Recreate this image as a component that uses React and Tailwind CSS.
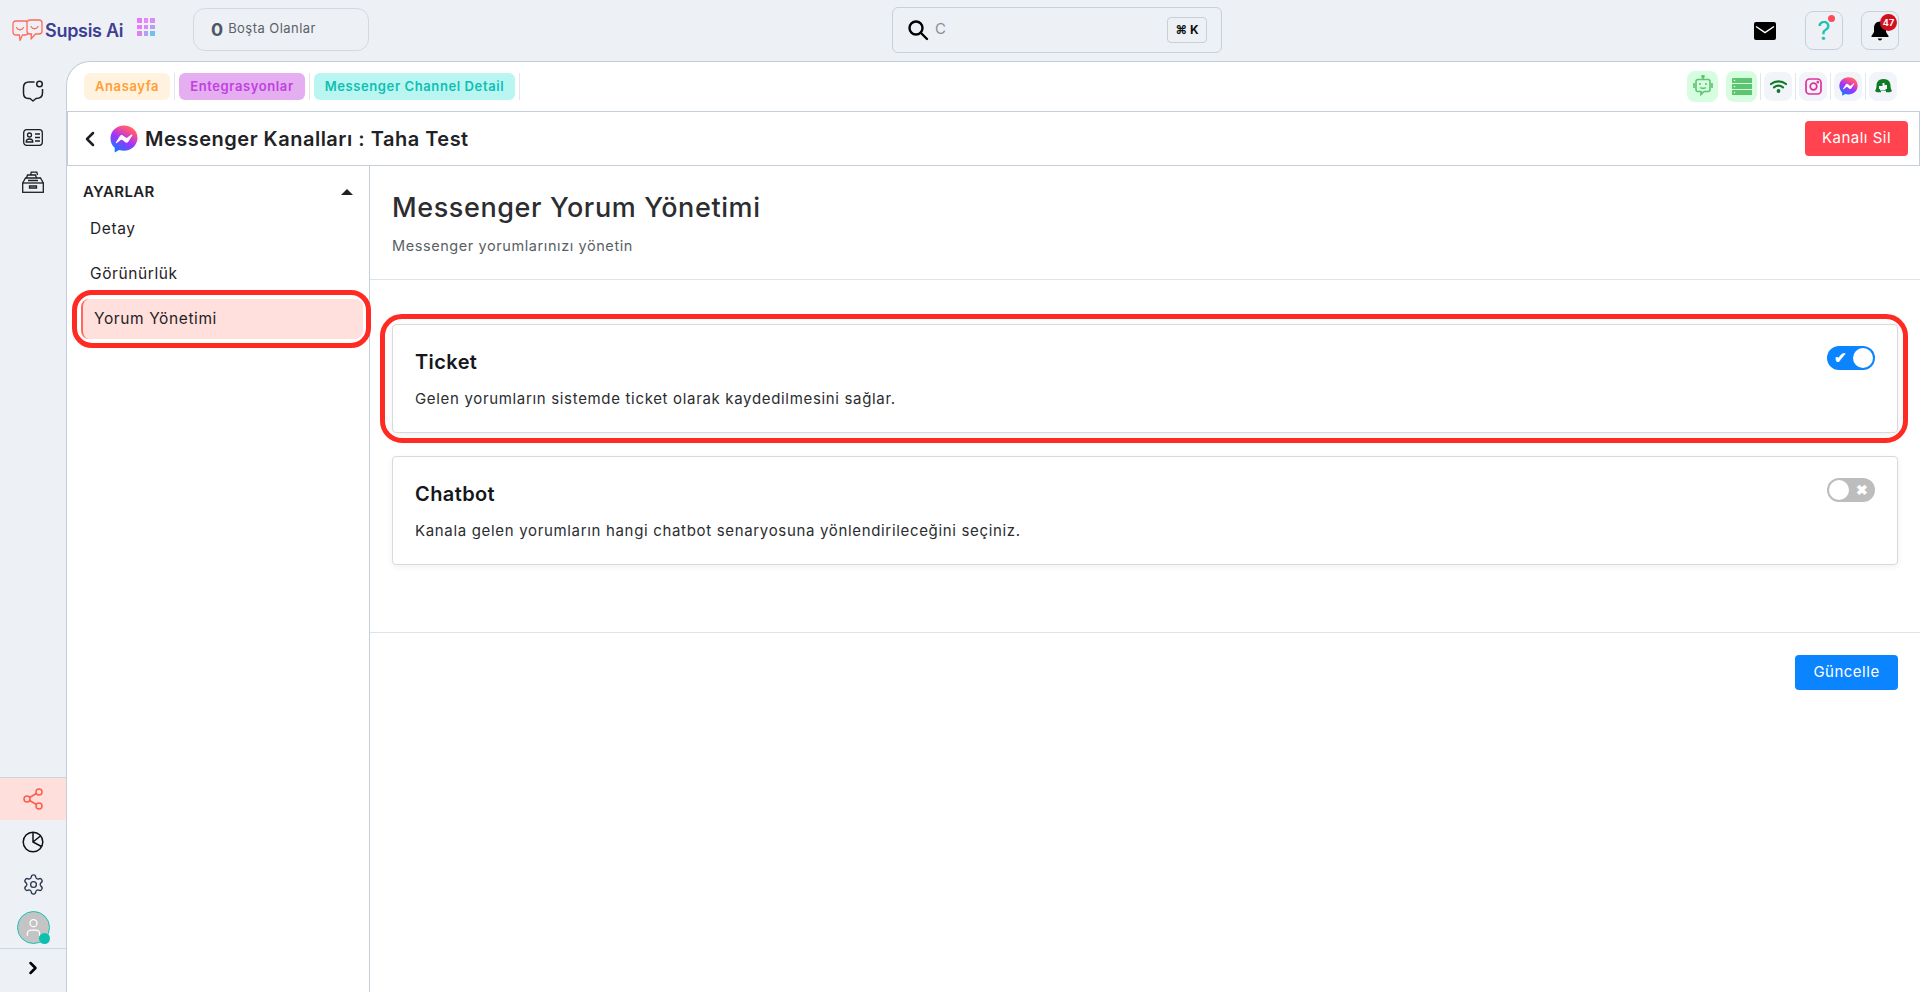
import { Share2, Settings, ChevronRight, ChevronLeft, User } from "lucide-react"

const font = { fontFamily: "Inter, 'Noto Sans', sans-serif" }

function LogoMark() {
  return (
    <svg width="31" height="24" viewBox="0 0 31 24" fill="none" stroke="#ff6a5c" strokeWidth="1.300" strokeLinecap="round" strokeLinejoin="round">
      <path d="M4 2h9c1.800 0 3 1.200 3 3v8c0 1.800-1.200 3-3 3h-2.500L8 21.500 7.500 16H4c-1.800 0-3-1.200-3-3V5c0-1.800 1.200-3 3-3z" />
      <path d="M4.500 8.500c1.500 3 5.500 3 7 0" />
      <path d="M18 1h9c1.800 0 3 1.200 3 3v8c0 1.800-1.200 3-3 3h-3.500L19 20l.5-5H18c-1.800 0-3-1.200-3-3V4c0-1.800 1.200-3 3-3z" fill="#edf1f6" />
      <path d="M19 7.500c1.500 3 5.500 3 7 0" />
    </svg>
  )
}

function AppGrid() {
  const colors = ["#e879f9", "#e28af7", "#d88df6", "#e879f9", "#d58cf5", "#b99cf3", "#df80f8", "#b3a0f2", "#6cc3f3"]
  return (
    <div className="grid grid-cols-3 gap-[2px] w-[18px] h-[18px]">
      {colors.map((c, i) => <span key={i} className="block" style={{ background: c }} />)}
    </div>
  )
}

function MessengerIcon({ size = 28 }) {
  return (
    <svg width={size} height={size} viewBox="0 0 28 28">
      <defs>
        <linearGradient id={"mg" + size} x1="0.25" y1="1" x2="0.8" y2="0">
          <stop offset="0" stopColor="#0a7cff" />
          <stop offset="0.45" stopColor="#a033ff" />
          <stop offset="0.8" stopColor="#ff5280" />
          <stop offset="1" stopColor="#ff7061" />
        </linearGradient>
      </defs>
      <path d="M14 0.500C6.400 0.500 0.500 6.100 0.500 13.400c0 3.800 1.600 7.100 4.200 9.400v4.700l4.400-2.500c1.500.4 3.100.7 4.900.7 7.600 0 13.500-5.600 13.500-12.900S21.600.5 14 .5z" fill={"url(#mg" + size + ")"} />
      <path d="M5.900 17.200l4-6.300c.6-1 2-1.300 3-.5l3.200 2.400c.3.2.7.2 1 0l4.300-3.300c.6-.4 1.300.3.900.9l-4 6.300c-.6 1-2 1.300-3 .5l-3.200-2.400c-.3-.2-.7-.2-1 0l-4.300 3.300c-.6.400-1.300-.3-.9-.9z" fill="#fff" />
    </svg>
  )
}

function Tab({ label, className }) {
  return <span className={"h-[27px] px-[11px] flex items-center rounded-md text-[13px] tracking-[0.6px] font-semibold " + className}>{label}</span>
}

function Sep() {
  return <span className="w-px h-[27px] bg-[#e3e7ec]" />
}

function IconBox({ children }) {
  return <span className="w-[28px] h-[29px] rounded-lg bg-[#f1f4f8] flex items-center justify-center">{children}</span>
}

function Toggle({ on }) {
  if (on) {
    return (
      <div className="relative w-[48px] h-[24px] rounded-full bg-[#0a84ff] shrink-0">
        <span className="absolute left-[7px] top-[3px] text-white text-[15px] font-bold leading-[17px]">✔</span>
        <span className="absolute right-[2px] top-[2px] w-[20px] h-[20px] rounded-full bg-white" />
      </div>
    )
  }
  return (
    <div className="relative w-[48px] h-[24px] rounded-full bg-[#bdbdbd] shrink-0">
      <span className="absolute right-[7px] top-[3px] text-white text-[14px] font-bold leading-[17px]">✖</span>
      <span className="absolute left-[2px] top-[2px] w-[20px] h-[20px] rounded-full bg-white" />
    </div>
  )
}

function SettingCard({ title, text, on, marked }) {
  return (
    <div className="relative h-[109px] rounded border border-[#d9d9d9] bg-white shadow-[0_2px_6px_rgba(0,0,0,0.06)] pl-[22px] pr-[22px] pt-[21px] flex justify-between">
      <div>
        <h3 className="text-[20px] leading-[32px] tracking-[0.4px] font-semibold text-[#15171a]">{title}</h3>
        <p className="mt-[10px] text-[15px] leading-[22px] tracking-[0.67px] text-[#2b2d30]">{text}</p>
      </div>
      <Toggle on={on} />
      {marked && <div className="absolute -left-[13px] -right-[11px] -top-[11px] -bottom-[11px] rounded-[22px] border-[5px] border-[#ff2a22] pointer-events-none" />}
    </div>
  )
}

export default function App() {
  return (
    <div className="h-screen w-full flex flex-col bg-[#edf1f6] overflow-hidden" style={font}>
      {/* top bar */}
      <header className="h-[61px] shrink-0 flex items-center relative">
        <div className="flex items-center w-[193px] pl-[12px] shrink-0">
          <LogoMark />
          <span className="ml-[2px] text-[18px] tracking-[-0.3px] font-semibold text-[#3d4092]">Supsis Ai</span>
          <span className="ml-[14px] -mt-[7px]"><AppGrid /></span>
        </div>
        <div className="w-[176px] h-[43px] -mt-[3px] shrink-0 rounded-xl border border-[#d3d9df] flex items-center pl-[17px]">
          <span className="text-[18px] font-bold text-[#4d5666]">0</span>
          <span className="ml-[5px] text-[13px] tracking-[0.45px] text-[#5c6068]">Boşta Olanlar</span>
        </div>
        <div className="ml-[523px] w-[330px] h-[46px] shrink-0 -mt-[2px] rounded-md border border-[#c6d0d8] flex items-center pl-[14px] pr-[14px]">
          <svg width="22" height="22" viewBox="0 0 22 22" fill="none" stroke="#000" strokeWidth="2.400" strokeLinecap="round"><circle cx="9" cy="9" r="6.500" /><path d="M14 14l6 6" /></svg>
          <span className="ml-[6px] text-[15px] text-[#8a8f96]">C</span>
          <span className="ml-auto w-[40px] h-[26px] rounded border border-[#c6d0d8] flex items-center justify-center text-[12px] font-bold text-[#111]">⌘ K</span>
        </div>
        <div className="ml-auto flex items-center pr-[21px]">
          <svg width="22" height="18" viewBox="0 0 22 18"><rect width="22" height="18" rx="2" fill="#000" /><path d="M2 4.500l9 6 9-6" fill="none" stroke="#fff" strokeWidth="1.500" /></svg>
          <span className="relative ml-[29px] w-[38px] h-[39px] rounded-lg border border-[#c6d0d8] flex items-center justify-center">
            <span className="text-[26px] font-normal text-[#17c3b2] leading-none">?</span>
            <span className="absolute right-[7px] top-[3px] w-[7px] h-[7px] rounded-full bg-[#ff4b55]" />
          </span>
          <span className="relative ml-[18px] w-[38px] h-[39px] rounded-lg border border-[#c6d0d8] flex items-center justify-center">
            <svg width="20" height="22" viewBox="0 0 20 22"><path d="M10 1.500c-3.600 0-6 2.800-6 6.200v4.300L1.500 16v1h17v-1L16 12V7.700c0-3.400-2.400-6.200-6-6.200z" fill="#000" /><path d="M7.800 18.500c.4 1.300 1.100 2 2.200 2s1.800-.7 2.200-2z" fill="#000" /></svg>
            <span className="absolute right-[1px] top-[2px] w-[17px] h-[17px] rounded-full bg-[#d40f1e] text-white text-[9px] font-bold flex items-center justify-center">47</span>
          </span>
        </div>
      </header>

      <div className="flex-1 flex min-h-0">
        {/* icon rail */}
        <aside className="w-[66px] shrink-0 flex flex-col items-center">
          <div className="mt-[18px] h-[26px] flex items-center">
            <svg width="22" height="24" viewBox="0 0 22 24" fill="none" stroke="#1c1f23" strokeWidth="1.500" strokeLinejoin="round">
              <path d="M12.500 2H7C3.500 2 1.500 4 1.500 7.500V13c0 3.500 2 5.500 5 5.500H8l3 2.500 3-2.500c4 0 6.500-2 6.500-5.500V9" />
              <circle cx="17.500" cy="4" r="2.800" />
            </svg>
          </div>
          <div className="mt-[20px] h-[24px] flex items-center">
            <svg width="20" height="17" viewBox="0 0 20 17" fill="none" stroke="#1c1f23" strokeWidth="1.300">
              <rect x="0.700" y="0.700" width="18.600" height="15.600" rx="3" />
              <circle cx="6.500" cy="6" r="2" />
              <path d="M3.200 13c0-2 1.200-3 3.300-3s3.300 1 3.300 3z" />
              <path d="M12 5h5M12 8.500h5M12 12h5" />
            </svg>
          </div>
          <div className="mt-[21px] h-[24px] flex items-center">
            <svg width="22" height="22" viewBox="0 0 22 22" fill="none" stroke="#1c1f23" strokeWidth="1.300">
              <rect x="0.700" y="12" width="20.600" height="9.300" />
              <path d="M0.700 12l2.800-5h15l2.800 5M7.500 15h7v2h-7z" />
              <path d="M4.500 7l1-3h8l1 3M6 9.500h10M8.500 4l.8-2.800h5.500l.7 2.800" />
            </svg>
          </div>

          <div className="mt-auto w-full flex flex-col items-center">
            <div className="w-full h-[43px] border-t border-[#cbd5dd] bg-[#ffdfdb] flex items-center justify-center">
              <Share2 size={24} strokeWidth={1.500} color="#ff5a4d" />
            </div>
            <div className="h-[43px] flex items-center">
              <svg width="22" height="22" viewBox="0 0 22 22" fill="none" stroke="#111" strokeWidth="1.500">
                <circle cx="11" cy="11" r="9.800" />
                <path d="M11 1.200V11l8.500 4.500M11 11l8-6.500" />
              </svg>
            </div>
            <div className="h-[43px] mb-[5px] flex items-center">
              <Settings size={23} strokeWidth={1.400} color="#2b3550" />
            </div>
            <div className="relative h-[33px] w-[33px] rounded-full bg-[#c4c4c4] border border-[#17c3b2] flex items-center justify-center">
              <User size={21} strokeWidth={1.500} color="#fff" />
              <span className="absolute -right-[1px] -bottom-[1px] w-[11px] h-[11px] rounded-full bg-[#0dbfae]" />
            </div>
            <div className="w-full mt-[4px] h-[44px] pb-[6px] border-t border-[#cbd5dd] flex items-center justify-center">
              <ChevronRight size={20} strokeWidth={3} color="#000" />
            </div>
          </div>
        </aside>

        {/* main panel */}
        <main className="flex-1 min-w-0 flex flex-col bg-white rounded-tl-[24px] border-l border-t border-[#c3ced8]">
          <div className="h-[49px] shrink-0 flex items-center pl-[17px] pr-[23px] gap-[4px]">
            <Tab label="Anasayfa" className="bg-[#fff2df] text-[#ffa033]" />
            <Sep />
            <Tab label="Entegrasyonlar" className="bg-[#e4aef0] text-[#c23fe2]" />
            <Sep />
            <Tab label="Messenger Channel Detail" className="bg-[#baf6f1] text-[#0cc0b4]" />
            <Sep />
            <div className="ml-auto flex items-center gap-[3px]">
              <span className="w-[31px] h-[31px] rounded-lg bg-[#d6fde0] flex items-center justify-center">
                <svg width="20" height="24" viewBox="0 0 20 24" fill="none" stroke="#5dc46f" strokeWidth="1.600">
                  <path d="M10 1v3" /><circle cx="10" cy="1.500" r="1" fill="#5dc46f" />
                  <path d="M5 4.500h10c1.300 0 2 .7 2 2v8c0 1.300-.7 2-2 2h-4l-3 3v-3H5c-1.300 0-2-.7-2-2v-8c0-1.300.7-2 2-2z" />
                  <path d="M7 8v2M13 8v2M7 12.500c1.500 1.200 4.500 1.200 6 0M1 8v5M19 8v5" />
                </svg>
              </span>
              <span className="ml-[5px] w-[31px] h-[31px] rounded-lg bg-[#d6fde0] flex items-center justify-center">
                <svg width="20" height="17" viewBox="0 0 20 17" fill="#5dc46f">
                  <rect y="0" width="20" height="5" rx="0.500" /><rect y="6" width="20" height="5" rx="0.500" /><rect y="12" width="20" height="5" rx="0.500" />
                  <circle cx="2.500" cy="2.500" r="0.800" fill="#d6fde0" /><circle cx="2.500" cy="8.500" r="0.800" fill="#d6fde0" /><circle cx="2.500" cy="14.500" r="0.800" fill="#d6fde0" />
                </svg>
              </span>
              <Sep />
              <IconBox>
                <svg width="17" height="13" viewBox="0 0 17 13" fill="none" stroke="#0d7a25" strokeWidth="2.200" strokeLinecap="round">
                  <path d="M1 4c4.500-3.600 10.500-3.600 15 0" /><path d="M4 7.300c2.700-2 6.300-2 9 0" /><circle cx="8.500" cy="11" r="0.800" fill="#0d7a25" />
                </svg>
              </IconBox>
              <Sep />
              <IconBox>
                <svg width="17" height="17" viewBox="0 0 17 17" fill="none" stroke="#e1309c" strokeWidth="1.700">
                  <rect x="1" y="1" width="15" height="15" rx="3.500" /><circle cx="8.500" cy="8.500" r="3.300" /><circle cx="12.800" cy="4.200" r="0.500" fill="#e1309c" />
                </svg>
              </IconBox>
              <Sep />
              <IconBox><MessengerIcon size={19} /></IconBox>
              <Sep />
              <IconBox>
                <svg width="17" height="15" viewBox="0 0 17 15">
                  <path d="M8.500 0C4 0 1.500 2.800 1.500 6.500c0 2.300-.5 4-1.500 5.500.8.800 2 1.300 3.500 1.300h10c1.500 0 2.700-.5 3.500-1.300-1-1.500-1.500-3.200-1.500-5.500C15.500 2.800 13 0 8.500 0z" fill="#0d7a25" />
                  <path d="M7.500 4h2v2H12v4H10.500v1.500H5V10H4V7h3.500z" fill="#f1f4f8" />
                  <rect x="6" y="12" width="5" height="3" fill="#f1f4f8" />
                </svg>
              </IconBox>
            </div>
          </div>

          <div className="h-[55px] shrink-0 flex items-center border-t border-b border-r border-l border-[#c3ced8] pl-[10px] pr-[11px]">
            <ChevronLeft size={24} strokeWidth={2.500} color="#1c1f23" />
            <span className="ml-[8px]"><MessengerIcon size={28} /></span>
            <h1 className="ml-[7px] text-[20px] tracking-[0.5px] font-semibold text-[#1f2226]">Messenger Kanalları : Taha Test</h1>
            <button className="ml-auto w-[103px] h-[35px] rounded bg-[#ff444f] text-white text-[15px] tracking-[0.5px]">Kanalı Sil</button>
          </div>

          <div className="flex-1 flex min-h-0">
            {/* settings menu */}
            <nav className="w-[303px] shrink-0 border-r border-[#c3ced8] pl-[17px] pr-[6px] pt-[13px]">
              <div className="h-[26px] -ml-[1px] flex items-center justify-between pr-[10px]">
                <span className="text-[15px] tracking-[0.35px] font-semibold text-[#1f2226]">AYARLAR</span>
                <span className="w-0 h-0 border-l-[6px] border-r-[6px] border-b-[6px] border-l-transparent border-r-transparent border-b-[#1f2226]" />
              </div>
              <div className="mt-[4px] h-[40px] flex items-center pl-[6px] text-[15.500px] tracking-[0.6px] text-[#1f2226]">Detay</div>
              <div className="mt-[5px] h-[40px] flex items-center pl-[6px] text-[15.500px] tracking-[0.6px] text-[#1f2226]">Görünürlük</div>
              <div className="relative mt-[5px] -ml-[3px] h-[40px] flex items-center rounded-lg pl-[11px] bg-[#ffe0dc] border-l-2 border-[#ff6a5c] text-[15.500px] tracking-[0.6px] text-[#1f2226]">
                Yorum Yönetimi
                <div className="absolute -left-[11px] -right-[8px] -top-[9px] -bottom-[9px] rounded-[20px] border-[5px] border-[#ff2a22] pointer-events-none" />
              </div>
            </nav>

            {/* content */}
            <section className="flex-1 min-w-0">
              <div className="h-[114px] border-b border-[#dfe3e7] pl-[22px] pt-[24px]">
                <h2 className="text-[27px] leading-[36px] tracking-[0.6px] font-medium text-[#2b2d30]">Messenger Yorum Yönetimi</h2>
                <p className="mt-[9px] text-[14.500px] leading-[22px] tracking-[0.58px] text-[#5a5f66]">Messenger yorumlarınızı yönetin</p>
              </div>
              <div className="h-[353px] border-b border-[#dfe3e7] px-[22px] pt-[44px] flex flex-col gap-[23px]">
                <SettingCard on marked title="Ticket" text="Gelen yorumların sistemde ticket olarak kaydedilmesini sağlar." />
                <SettingCard title="Chatbot" text="Kanala gelen yorumların hangi chatbot senaryosuna yönlendirileceğini seçiniz." />
              </div>
              <div className="flex justify-end pr-[22px] pt-[22px]">
                <button className="w-[103px] h-[35px] rounded bg-[#0a84ff] text-white text-[15px] tracking-[0.5px]">Güncelle</button>
              </div>
            </section>
          </div>
        </main>
      </div>
    </div>
  )
}
